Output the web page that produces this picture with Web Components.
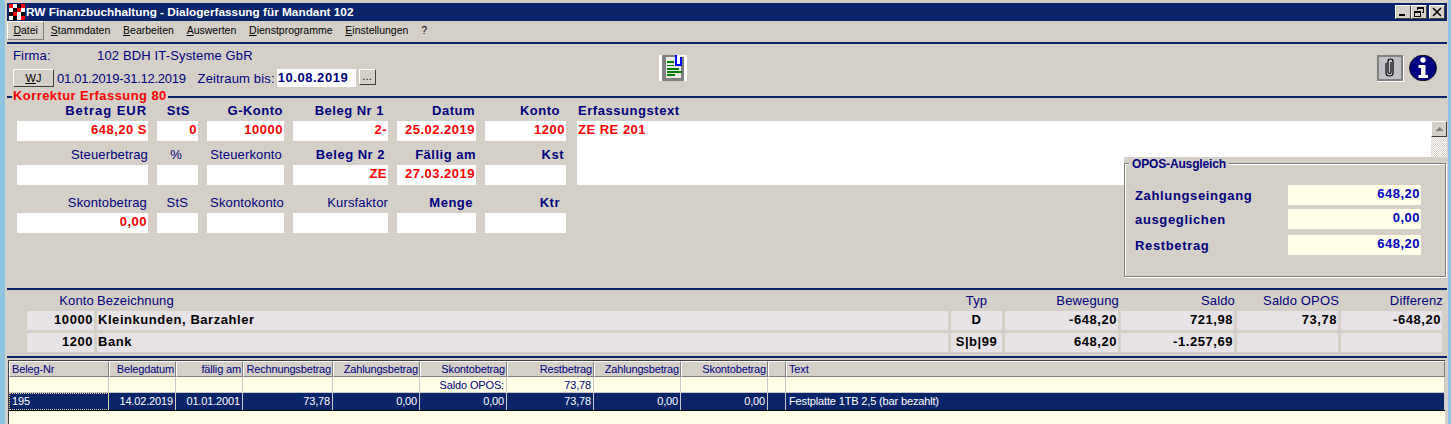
<!DOCTYPE html>
<html lang="de">
<head>
<meta charset="utf-8">
<title>RW Finanzbuchhaltung</title>
<style>
    html, body { margin: 0; height: 424px; overflow: hidden; background: #8fc3e2; }
    body { font-family: "Liberation Sans", Arial, sans-serif; }
</style>
</head>
<body>
<rw-window>
    <rw-titlebar text="RW Finanzbuchhaltung - Dialogerfassung für Mandant 102"></rw-titlebar>
    <rw-menubar items="Datei,Stammdaten,Bearbeiten,Auswerten,Dienstprogramme,Einstellungen,?"></rw-menubar>
    <rw-rule></rw-rule>
    <rw-header></rw-header>
    <rw-rule legend="Korrektur Erfassung 80"></rw-rule>
    <rw-form>
        <rw-field label="Betrag EUR" value="648,20 S" strong pad="1" ls="0.95"></rw-field>
        <rw-field label="StS" value="0" strong pad="8"></rw-field>
        <rw-field label="G-Konto" value="10000" strong pad="1"></rw-field>
        <rw-field label="Beleg Nr 1" value="2-" strong pad="4"></rw-field>
        <rw-field label="Datum" value="25.02.2019" strong pad="1"></rw-field>
        <rw-field label="Konto" value="1200" strong pad="6"></rw-field>
        <rw-textarea label="Erfassungstext" value="ZE RE 201"></rw-textarea>
        <rw-scrollbar></rw-scrollbar>

        <rw-field label="Steuerbetrag" pad="0"></rw-field>
        <rw-field label="%" pad="16"></rw-field>
        <rw-field label="Steuerkonto" pad="2"></rw-field>
        <rw-field label="Beleg Nr 2" value="ZE" strong pad="3"></rw-field>
        <rw-field label="Fällig am" value="27.03.2019" strong pad="0"></rw-field>
        <rw-field label="Kst" strong pad="2"></rw-field>

        <rw-field label="Skontobetrag" value="0,00" pad="1"></rw-field>
        <rw-field label="StS" pad="10"></rw-field>
        <rw-field label="Skontokonto" pad="0"></rw-field>
        <rw-field label="Kursfaktor" pad="0"></rw-field>
        <rw-field label="Menge" strong pad="3"></rw-field>
        <rw-field label="Ktr" strong pad="6"></rw-field>
    </rw-form>
    <rw-opos></rw-opos>
    <rw-rule></rw-rule>
    <rw-accounts></rw-accounts>
    <rw-rule></rw-rule>
    <rw-grid></rw-grid>
</rw-window>

<script>
class RwWindow extends HTMLElement {
    constructor() {
        super();
        this.attachShadow({ mode: 'open' }).innerHTML = `
            <style>
                :host {
                    display: flex;
                    flex-direction: column;
                    position: relative;
                    box-sizing: border-box;
                    width: 1443px;
                    height: 424px;
                    margin-left: 5px;
                    padding: 3px 1px 0 2px;
                    background: #d4d0c8;
                    overflow: hidden;
                    color: #000080;
                }
            </style>
            <slot></slot>`;
    }
}

class RwTitlebar extends HTMLElement {
    connectedCallback() {
        // 4x4 checker logo
        const pattern = ['rwbr', 'wbrw', 'brwb', 'wbwr'];
        const colors = { r: '#ff0000', w: '#ffffff', b: '#000000' };
        let rects = '';
        pattern.forEach((row, y) => [...row].forEach((c, x) => {
            rects += `<rect x="${x * 4}" y="${y * 4}" width="4" height="4" fill="${colors[c]}"/>`;
        }));
        this.attachShadow({ mode: 'open' }).innerHTML = `
            <style>
                :host {
                    display: flex;
                    align-items: center;
                    flex: none;
                    height: 18px;
                    padding: 0 2px;
                    background: #0a246a;
                    color: #fff;
                    font: bold 11.8px "Liberation Sans", sans-serif;
                }
                svg.logo { margin-right: 1px; flex: none; }
                .text { flex: 1; white-space: nowrap; }
                .btn {
                    width: 16px;
                    height: 14px;
                    box-sizing: border-box;
                    background: #d4d0c8;
                    border: 1px solid;
                    border-color: #fff #404040 #404040 #fff;
                    display: flex;
                    align-items: center;
                    justify-content: center;
                }
                .btn.last { margin-left: 2px; }
            </style>
            <svg class="logo" width="16" height="16" viewBox="0 0 16 16" shape-rendering="crispEdges">${rects}</svg>
            <span class="text">${this.getAttribute('text')}</span>
            <span class="btn"><svg width="10" height="10" viewBox="0 0 10 10" shape-rendering="crispEdges"><rect x="1" y="7" width="6" height="2" fill="#000"/></svg></span>
            <span class="btn"><svg width="10" height="10" viewBox="0 0 10 10" fill="none" stroke="#000" shape-rendering="crispEdges"><path d="M3.5 2.5V0.5H9.5V5.5H7.5M3 1.5H9"/><path d="M0.5 4.5H6.5V9.5H0.5Z M0 5.5H6"/></svg></span>
            <span class="btn last"><svg width="10" height="10" viewBox="0 0 10 10" fill="none" stroke="#000" stroke-width="1.5"><path d="M1 1L9 9M9 1L1 9"/></svg></span>`;
    }
}

class RwMenubar extends HTMLElement {
    connectedCallback() {
        const items = this.getAttribute('items').split(',');
        this.attachShadow({ mode: 'open' }).innerHTML = `
            <style>
                :host {
                    display: flex;
                    align-items: center;
                    flex: none;
                    height: 21px;
                    padding-bottom: 2px;
                    box-sizing: border-box;
                    color: #000;
                    font: 10.5px "Liberation Sans", sans-serif;
                }
                span { padding: 0 5.4px; line-height: 17px; white-space: nowrap; border: 1px solid transparent; }
                span.on { border-color: #fff #808080 #808080 #fff; }
            </style>
            ${items.map((t, i) => `<span class="${i ? '' : 'on'}">${t === '?' ? t : `<u>${t[0]}</u>${t.slice(1)}`}</span>`).join('')}`;
    }
}

class RwRule extends HTMLElement {
    connectedCallback() {
        const legend = this.getAttribute('legend');
        this.attachShadow({ mode: 'open' }).innerHTML = `
            <style>
                :host {
                    display: flex;
                    align-items: center;
                    flex: none;
                    height: 2px;
                    background: #0a246a;
                }
                span {
                    margin: 0 0 3px 5px;
                    padding: 0 1px;
                    background: #d4d0c8;
                    color: #ff0000;
                    font: bold 13px/14px "Liberation Sans", sans-serif;
                    letter-spacing: 0.42px;
                    white-space: nowrap;
                }
            </style>
            ${legend ? `<span>${legend}</span>` : ''}`;
    }
}

class RwHeader extends HTMLElement {
    constructor() {
        super();
        this.attachShadow({ mode: 'open' }).innerHTML = `
            <style>
                :host {
                    display: grid;
                    grid-template-columns: 652px 28px 1fr;
                    flex: none;
                    height: 52px;
                    color: #000080;
                    font: 13px "Liberation Sans", sans-serif;
                    letter-spacing: 0.15px;
                }
                .left { padding: 5px 0 0 6px; }
                .firma { display: grid; grid-template-columns: 84px auto; height: 20px; line-height: 13px; }
                .zeit { display: flex; align-items: center; height: 18px; }
                .range { letter-spacing: -0.28px; }
                .btn {
                    box-sizing: border-box;
                    background: #d4d0c8;
                    border: 1px solid;
                    border-color: #fff #404040 #404040 #fff;
                    color: #000;
                    font-size: 11px;
                    display: flex;
                    align-items: center;
                    justify-content: center;
                }
                .wj { width: 41px; height: 18px; margin-right: 3px; }
                .dots { width: 17px; height: 16px; margin: 0 0 2px 3px; padding-bottom: 2px; }
                .sp { margin-left: 12px; margin-right: 2px; }
                .date {
                    width: 79px;
                    height: 18px;
                    background: #fff;
                    font: bold 13px/18px "Liberation Sans", sans-serif;
                    letter-spacing: 0.55px;
                    padding-left: 1px;
                    box-sizing: border-box;
                }
                .doc { padding-top: 11px; }
                .right { display: flex; justify-content: flex-end; align-items: flex-start; padding: 11px 10px 0 0; gap: 6px; }
                .clip {
                    box-sizing: border-box;
                    width: 26px;
                    height: 26px;
                    background: #c4c0c8;
                    border: 2px solid #808080;
                    box-shadow: 1px 1px 0 #fff;
                    display: flex;
                    align-items: center;
                    justify-content: center;
                }
            </style>
            <div class="left">
                <div class="firma"><span>Firma:</span><span>102 BDH IT-Systeme GbR</span></div>
                <div class="zeit">
                    <span class="btn wj"><span><u>W</u>J</span></span>
                    <span class="range">01.01.2019-31.12.2019</span>
                    <span class="sp">Zeitraum bis:</span>
                    <span class="date">10.08.2019</span>
                    <span class="btn dots">...</span>
                </div>
            </div>
            <div class="doc">
                <svg width="28" height="26" viewBox="0 0 28 26" shape-rendering="crispEdges">
                    <rect width="28" height="26" fill="#fff"/>
                    <rect x="3" y="0" width="22" height="26" fill="#808080"/>
                    <rect x="7" y="2" width="15" height="21" fill="#eceae4"/>
                    <rect x="18" y="0" width="7" height="2" fill="#fff"/>
                    <rect x="18" y="2" width="3" height="7" fill="#fff"/>
                    <rect x="8" y="6" width="7" height="2" fill="#008000"/>
                    <rect x="8" y="10" width="7" height="1" fill="#008000"/>
                    <rect x="8" y="13" width="12" height="2" fill="#008000"/>
                    <rect x="8" y="16" width="15" height="2" fill="#008000"/>
                    <rect x="8" y="19" width="8" height="2" fill="#008000"/>
                    <path d="M16 0H18V9H21V2H23V11H16Z" fill="#0000ff"/>
                </svg>
            </div>
            <div class="right">
                <span class="clip">
                    <svg width="14" height="20" viewBox="0 0 14 20" fill="none" stroke="#000" stroke-width="1.2">
                        <path d="M3 5V15C3 18 5 18 6.500 18C8 18 10 18 10 15V3.500C10 1.500 9 1 7.500 1C6 1 5 1.500 5 3.500V14C5 15 6 15.500 6.500 15.500C7 15.500 8 15 8 14V4"/>
                    </svg>
                </span>
                <svg width="28" height="26" viewBox="0 0 28 26">
                    <ellipse cx="14" cy="13" rx="13.500" ry="12.800" fill="#000080" stroke="#000" stroke-width="0.8"/>
                    <circle cx="14" cy="5" r="2.700" fill="#fff"/>
                    <path d="M9.500 10H16.500V20H19V23H9.500V20H12V13H9.500Z" fill="#fff"/>
                </svg>
            </div>`;
    }
}

class RwForm extends HTMLElement {
    constructor() {
        super();
        this.attachShadow({ mode: 'open' }).innerHTML = `
            <style>
                :host {
                    display: grid;
                    grid-template-columns: 131px 41px 77px 95px 79px 81px 854px 16px;
                    column-gap: 9px;
                    grid-template-rows: 38px 38px 42px;
                    row-gap: 6px;
                    align-content: start;
                    flex: none;
                    box-sizing: border-box;
                    height: 190px;
                    padding: 5px 0 0 10px;
                }
                ::slotted(rw-textarea) { grid-column: 7; grid-row: 1 / span 2; margin-left: 2px; margin-right: -2px; }
                ::slotted(rw-scrollbar) { grid-column: 8; grid-row: 1 / span 2; margin-left: -7px; }
            </style>
            <slot></slot>`;
    }
}

class RwField extends HTMLElement {
    connectedCallback() {
        const strong = this.hasAttribute('strong');
        const value = this.getAttribute('value') || '';
        const ls = this.getAttribute('ls') || (strong ? '0.5' : '0.15');
        this.attachShadow({ mode: 'open' }).innerHTML = `
            <style>
                :host {
                    display: flex;
                    flex-direction: column;
                    justify-content: flex-end;
                    min-width: 0;
                }
                .label {
                    height: 18px;
                    text-align: right;
                    padding-right: ${this.getAttribute('pad') || 0}px;
                    color: #000080;
                    font: ${strong ? 'bold' : 'normal'} 13px/16px "Liberation Sans", sans-serif;
                    letter-spacing: ${ls}px;
                    white-space: nowrap;
                }
                .value {
                    height: 20px;
                    background: #fff;
                    color: #ff0000;
                    text-align: right;
                    padding-right: 1px;
                    font: bold 13px/18px "Liberation Sans", sans-serif;
                    letter-spacing: 0.5px;
                    white-space: nowrap;
                }
            </style>
            <div class="label">${this.getAttribute('label')}</div>
            <div class="value">${value}</div>`;
    }
}

class RwTextarea extends HTMLElement {
    connectedCallback() {
        this.attachShadow({ mode: 'open' }).innerHTML = `
            <style>
                :host { display: flex; flex-direction: column; }
                .label {
                    height: 18px;
                    padding-left: 1px;
                    color: #000080;
                    font: bold 13px/16px "Liberation Sans", sans-serif;
                    letter-spacing: 0.55px;
                    white-space: nowrap;
                }
                .value {
                    flex: 1;
                    background: #fff;
                    color: #ff0000;
                    padding-left: 1px;
                    font: bold 13px/18px "Liberation Sans", sans-serif;
                    letter-spacing: 0.5px;
                }
            </style>
            <div class="label">${this.getAttribute('label')}</div>
            <div class="value">${this.getAttribute('value')}</div>`;
    }
}

class RwScrollbar extends HTMLElement {
    constructor() {
        super();
        this.attachShadow({ mode: 'open' }).innerHTML = `
            <style>
                :host { display: flex; flex-direction: column; padding-top: 18px; width: 16px; }
                .up {
                    box-sizing: border-box;
                    height: 16px;
                    background: #d4d0c8;
                    border: 1px solid;
                    border-color: #fff #404040 #404040 #fff;
                    display: flex;
                    align-items: center;
                    justify-content: center;
                }
                .track {
                    height: 20px;
                    background: repeating-conic-gradient(#d4d0c8 0 25%, #fff 0 50%) 0 0 / 2px 2px;
                }
            </style>
            <div class="up"><svg width="8" height="5" viewBox="0 0 8 5" shape-rendering="crispEdges"><path d="M4 0L8 4H0Z" fill="#808080"/></svg></div>
            <div class="track"></div>`;
    }
}

class RwOpos extends HTMLElement {
    constructor() {
        super();
        const row = (label, value, top) => `
            <div class="row" style="margin-top:${top}px">
                <span class="lab">${label}</span><span class="val">${value}</span>
            </div>`;
        this.attachShadow({ mode: 'open' }).innerHTML = `
            <style>
                /* the panel lies over the Erfassungstext box */
                :host {
                    display: block;
                    position: absolute;
                    left: 1119px;
                    top: 157px;
                    width: 322px;
                    height: 120px;
                    box-sizing: border-box;
                    padding-top: 6px;
                    background: #d4d0c8;
                    color: #000080;
                }
                .frame {
                    box-sizing: border-box;
                    height: 114px;
                    border: 1px solid #808080;
                    box-shadow: inset 1px 1px 0 #fff, 1px 1px 0 #fff;
                    padding: 21px 0 0 10px;
                    position: relative;
                }
                .legend {
                    position: absolute;
                    left: 4px;
                    top: -6px;
                    padding: 0 3px;
                    background: #d4d0c8;
                    font: bold 12px/13px "Liberation Sans", sans-serif;
                    letter-spacing: -0.15px;
                }
                .row {
                    display: grid;
                    grid-template-columns: 153px 133px;
                    height: 19px;
                    font: bold 13px/19px "Liberation Sans", sans-serif;
                    letter-spacing: 0.65px;
                }
                .lab { padding-top: 1px; }
                .val {
                    background: #ffffe8;
                    color: #0000c0;
                    text-align: right;
                    padding-right: 1px;
                    line-height: 18px;
                    letter-spacing: 0.5px;
                }
            </style>
            <div class="frame">
                <span class="legend">OPOS-Ausgleich</span>
                ${row('Zahlungseingang', '648,20', 0)}
                ${row('ausgeglichen', '0,00', 5)}
                ${row('Restbetrag', '648,20', 7)}
            </div>`;
    }
}

class RwAccounts extends HTMLElement {
    constructor() {
        super();
        const heads = ['Konto', 'Bezeichnung', 'Typ', 'Bewegung', 'Saldo', 'Saldo OPOS', 'Differenz'];
        const rows = [
            ['10000', 'Kleinkunden, Barzahler', 'D', '-648,20', '721,98', '73,78', '-648,20'],
            ['1200', 'Bank', 'S|b|99', '648,20', '-1.257,69', '', '']
        ];
        const cls = ['r', 'l', 'c', 'r', 'r', 'r', 'r'];
        this.attachShadow({ mode: 'open' }).innerHTML = `
            <style>
                :host {
                    display: grid;
                    grid-template-columns: 67px 851px 51px 113px 113px 101px 101px;
                    grid-template-rows: 18px 19px 19px;
                    column-gap: 3px;
                    row-gap: 3px;
                    flex: none;
                    box-sizing: border-box;
                    height: 66px;
                    padding-left: 20px;
                    font-family: "Liberation Sans", sans-serif;
                }
                .h {
                    grid-row: 1;
                    height: 21px;
                    color: #000080;
                    font-size: 13px;
                    line-height: 21px;
                    letter-spacing: 0.15px;
                    white-space: nowrap;
                }
                .h.r:nth-of-type(n+2) { margin-right: -1px; }
                .d {
                    background: #e6e2e6;
                    color: #000;
                    font-size: 13px;
                    font-weight: bold;
                    line-height: 17px;
                    letter-spacing: 0.55px;
                    padding: 0 1px;
                    white-space: nowrap;
                }
                .r { text-align: right; }
                .c { text-align: center; }
            </style>
            ${heads.map((h, i) => `<div class="h ${cls[i]}">${h}</div>`).join('')}
            ${rows.map(r => r.map((t, i) => `<div class="d ${cls[i]}">${t}</div>`).join('')).join('')}`;
    }
}

class RwGrid extends HTMLElement {
    constructor() {
        super();
        const cols = [100, 67, 67, 90, 87, 87, 87, 87, 87, 18, 659];
        const align = ['l', 'r', 'r', 'r', 'r', 'r', 'r', 'r', 'r', 'l', 'l'];
        const head = ['Beleg-Nr', 'Belegdatum', 'fällig am', 'Rechnungsbetrag', 'Zahlungsbetrag', 'Skontobetrag', 'Restbetrag', 'Zahlungsbetrag', 'Skontobetrag', '', 'Text'];
        const first = ['', '', '', '', '', 'Saldo OPOS:', '73,78', '', '', '', ''];
        const sel = ['195', '14.02.2019', '01.01.2001', '73,78', '0,00', '0,00', '73,78', '0,00', '0,00', '', 'Festplatte 1TB 2,5 (bar bezahlt)'];
        const line = (cells, cls) => `<div class="row ${cls}">${cells.map((t, i) => `<div class="cell ${align[i]}">${t}</div>`).join('')}</div>`;
        this.attachShadow({ mode: 'open' }).innerHTML = `
            <style>
                :host {
                    display: block;
                    flex: 1;
                    margin: 2px 2px 0 1px;
                    background: #ffffe8;
                    border: solid #404040;
                    border-width: 1px 0 0 1px;
                    color: #000080;
                    font: 11px "Liberation Sans", sans-serif;
                    letter-spacing: -0.15px;
                }
                .row { display: grid; grid-template-columns: ${cols.map(c => c + 'px').join(' ')}; height: 16px; }
                .cell {
                    box-sizing: border-box;
                    padding: 1px 2px 0 3px;
                    line-height: 14px;
                    white-space: nowrap;
                    overflow: hidden;
                    border-right: 1px solid #c8c8c8;
                    border-bottom: 1px solid #c8c8c8;
                }
                .r { text-align: right; }
                .head .cell {
                    background: #d4d0c8;
                    border-top: 1px solid #fff;
                    border-left: 1px solid #fff;
                    border-right: 1px solid #808080;
                    border-bottom: 1px solid #808080;
                    line-height: 14px;
                    padding: 0 1px 0 2px;
                }
                .sel { border-bottom: 1px solid #000; height: 17px; }
                .sel .cell {
                    background: #0a246a;
                    color: #fff;
                    border-bottom: 0;
                    line-height: 15px;
                }
                .sel .cell:first-child { outline: 1px dotted #e8d080; outline-offset: -1px; }
            </style>
            ${line(head, 'head')}
            ${line(first, '')}
            ${line(sel, 'sel')}`;
    }
}

customElements.define('rw-window', RwWindow);
customElements.define('rw-titlebar', RwTitlebar);
customElements.define('rw-menubar', RwMenubar);
customElements.define('rw-rule', RwRule);
customElements.define('rw-header', RwHeader);
customElements.define('rw-form', RwForm);
customElements.define('rw-field', RwField);
customElements.define('rw-textarea', RwTextarea);
customElements.define('rw-scrollbar', RwScrollbar);
customElements.define('rw-opos', RwOpos);
customElements.define('rw-accounts', RwAccounts);
customElements.define('rw-grid', RwGrid);
</script>
</body>
</html>
